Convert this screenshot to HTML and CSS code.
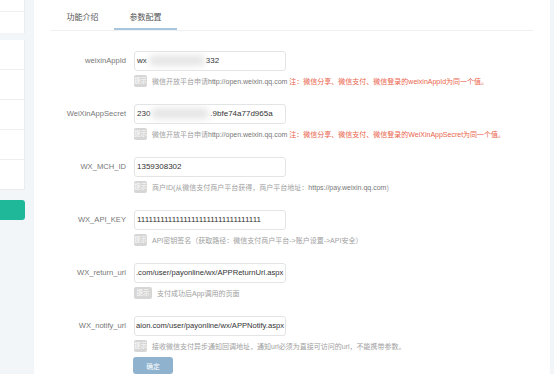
FILE: index.html
```html
<!DOCTYPE html>
<html lang="zh-CN">
<head>
<meta charset="utf-8">
<link rel="stylesheet" href="styles.css">
</head>
<body>
<div class="layout">
  <aside class="sidebar">
    <div class="side-top">
      <div class="side-item short"></div>
      <div class="side-item"></div>
    </div>
    <div class="side-list">
      <div class="side-row"></div>
      <div class="side-row"></div>
      <div class="side-row"></div>
      <div class="side-row"></div>
      <div class="side-row"></div>
    </div>
    <div class="side-btn"></div>
  </aside>
  <main class="main">
    <div class="tabs">
      <div class="tab">功能介绍</div>
      <div class="tab active">参数配置</div>
    </div>
    <form class="form">
      <div class="row">
        <label class="label">weixinAppId</label>
        <div class="input">wx<span class="blur blur-a"></span>332</div>
        <div class="hint"><span class="badge">提示</span><span class="hint-text">微信开放平台申请<b class="dark">http://open.weixin.qq.com</b> <span class="red">注：微信分享、微信支付、微信登录的weixinAppId为同一个值。</span></span></div>
      </div>
      <div class="row">
        <label class="label">WeiXinAppSecret</label>
        <div class="input">230<span class="blur blur-b"></span>.9bfe74a77d965a</div>
        <div class="hint"><span class="badge">提示</span><span class="hint-text">微信开放平台申请<b class="dark">http://open.weixin.qq.com</b> <span class="red">注：微信分享、微信支付、微信登录的WeiXinAppSecret为同一个值。</span></span></div>
      </div>
      <div class="row">
        <label class="label">WX_MCH_ID</label>
        <div class="input">1359308302</div>
        <div class="hint"><span class="badge">提示</span><span class="hint-text">商户ID(从微信支付商户平台获得，商户平台地址：<b class="dark">https://pay.weixin.qq.com</b>)</span></div>
      </div>
      <div class="row">
        <label class="label">WX_API_KEY</label>
        <div class="input">11111111111111111111111111111111</div>
        <div class="hint"><span class="badge">提示</span><span class="hint-text">API密钥签名（获取路径：微信支付商户平台-&gt;账户设置-&gt;API安全）</span></div>
      </div>
      <div class="row">
        <label class="label">WX_return_url</label>
        <div class="input url">.com/user/payonline/wx/APPReturnUrl.aspx</div>
        <div class="hint"><span class="badge">提示</span><span class="hint-text">支付成功后App调用的页面</span></div>
      </div>
      <div class="row last">
        <label class="label">WX_notify_url</label>
        <div class="input url">aion.com/user/payonline/wx/APPNotify.aspx</div>
        <div class="hint"><span class="badge">提示</span><span class="hint-text">接收微信支付异步通知回调地址，通知url必须为直接可访问的url，不能携带参数。</span></div>
        <div class="actions"><button type="button" class="btn">确定</button></div>
      </div>
    </form>
  </main>
</div>
</body>
</html>
```

FILE: styles.css
```css
* { box-sizing: border-box; }
html, body { margin: 0; padding: 0; }
body {
  width: 554px;
  height: 374px;
  overflow: hidden;
  background: #f3f6f9;
  font-family: "Liberation Sans", "Noto Sans CJK SC", sans-serif;
  color: #666;
}
.layout {
  display: flex;
  gap: 9px;
  height: 374px;
}
.sidebar {
  width: 25px;
  flex: none;
  display: flex;
  flex-direction: column;
}
.side-top {
  background: #fff;
  height: 33px;
  border-right: 1px solid #e9ecef;
}
.side-item.short {
  height: 12px;
  border-bottom: 1px solid #eef0f2;
}
.side-list {
  margin-top: 7px;
  background: #fff;
  border-right: 1px solid #e9ecef;
  border-bottom: 1px solid #e9ecef;
}
.side-row {
  height: 30px;
  border-top: 1px solid #eceef0;
}
.side-row:first-child { height: 29px; border-top: none; }
.side-btn {
  margin-top: 10px;
  height: 20px;
  background: #1fb99a;
  border-radius: 0 3px 3px 0;
}
.main {
  flex: 1;
  background: #fff;
  margin-right: 4px;
  padding: 0 17px 0 16px;
}
.tabs {
  display: flex;
  height: 31px;
  border-bottom: 1px solid #eef0f2;
  padding-left: 1px;
}
.tab {
  width: 63px;
  height: 30px;
  padding-top: 12px;
  line-height: 12px;
  font-size: 8px;
  text-align: center;
  color: #555;
}
.tab.active {
  border-bottom: 2px solid #a9c5dc;
}
.form {
  margin-top: 20px;
}
.row {
  display: grid;
  grid-template-columns: 76px 152px;
  column-gap: 8px;
  margin-bottom: 17px;
}
.row.last { margin-bottom: 0; }
.label {
  grid-column: 1;
  text-align: right;
  font-size: 7.6px;
  line-height: 20px;
  color: #777;
}
.input {
  grid-column: 2;
  height: 20px;
  border: 1px solid #e2e4e6;
  border-radius: 3px;
  padding: 0 2px;
  font-size: 8px;
  line-height: 18px;
  color: #333;
  white-space: nowrap;
  overflow: hidden;
}
.input.url {
  font-size: 7.6px;
  padding: 0 1px;
}
.blur {
  display: inline-block;
  height: 11px;
  vertical-align: middle;
  background: #e6e6e6;
  filter: blur(3px);
  border-radius: 5px;
}
.blur-a { width: 56px; margin: 0 1px 0 2px; }
.blur-b { width: 58px; margin: 0 1px; }
.hint {
  grid-column: 2;
  margin-top: 3px;
  height: 13px;
  display: flex;
  align-items: center;
  gap: 5px;
  white-space: nowrap;
}
.badge {
  display: inline-block;
  width: 18px;
  height: 12px;
  line-height: 12px;
  text-align: center;
  background: #d6d6d6;
  color: #fff;
  font-size: 6.5px;
  border-radius: 2px;
}
.hint-text {
  font-size: 7px;
  color: #a0a0a0;
}
.dark { font-weight: normal; color: #777; }
.red { color: #ea5f4a; }
.actions {
  grid-column: 2;
  margin-top: 5px;
  margin-left: -1px;
}
.btn {
  display: block;
  width: 40px;
  height: 17px;
  border: none;
  border-radius: 3px;
  background: #8fb3cf;
  color: #fff;
  font-family: inherit;
  font-size: 6.8px;
  padding: 0;
}
```
